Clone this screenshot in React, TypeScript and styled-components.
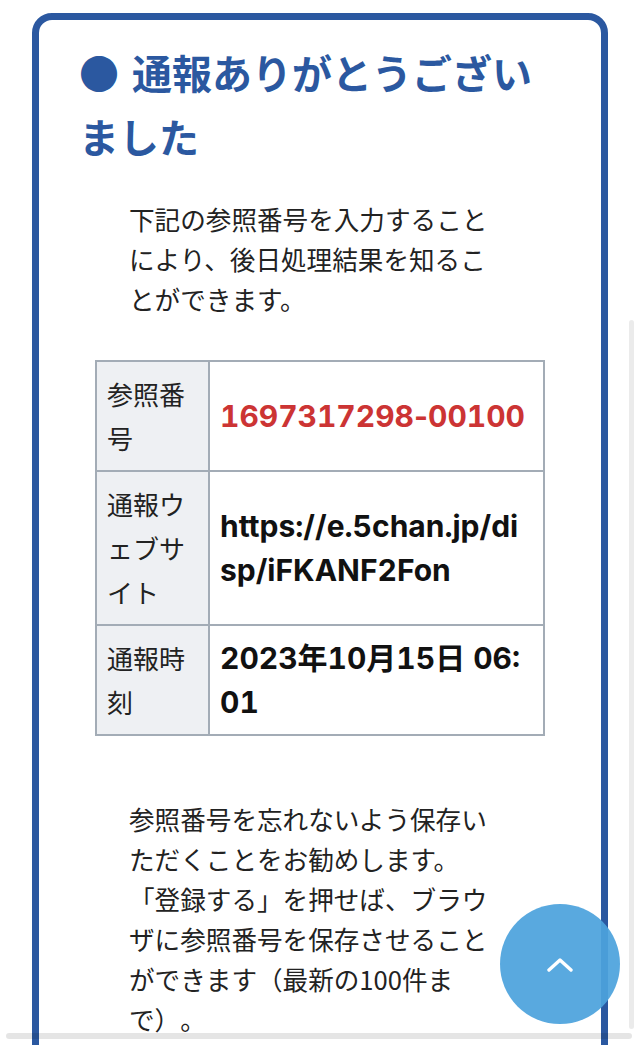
import React from "react";
import styled, { createGlobalStyle } from "styled-components";

const GlobalStyle = createGlobalStyle`
  html, body {
    margin: 0;
    padding: 0;
    background: #ffffff;
    overflow: hidden;
  }
  body {
    font-family: "Noto Sans CJK JP", "Noto Sans", sans-serif;
    color: #222222;
    -webkit-font-smoothing: antialiased;
    text-spacing-trim: space-all;
  }
`;

const Page = styled.div`
  padding: 13px 32px 0;
`;

const Card = styled.section`
  border: 7px solid #2b58a0;
  border-radius: 20px;
  padding: 20px 40px 120px;
  background: #ffffff;
`;

const Title = styled.h2`
  margin: 0;
  font-size: 40px;
  line-height: 64px;
  font-weight: 700;
  color: #2b58a0;
`;

const Bullet = styled.span`
  display: inline-block;
  margin-right: 13px;
`;

const Paragraph = styled.p<{ $top: number }>`
  margin: ${(p) => p.$top}px 60px 0 50px;
  font-size: 25.6px;
  line-height: 40px;
  color: #222222;
  text-spacing-trim: space-all;
`;

const Table = styled.table`
  margin: 41px auto 0;
  width: 450px;
  border-collapse: collapse;
  table-layout: fixed;
  border: 2px solid #a3acb6;
`;

const HeadCol = styled.col`
  width: 113px;
`;

const Th = styled.th`
  background: #eef0f3;
  border: 2px solid #a3acb6;
  padding: 10px 10px;
  font-size: 26px;
  line-height: 44px;
  font-weight: 400;
  text-align: left;
  vertical-align: top;
  color: #222222;
`;

const Td = styled.td<{ $accent?: boolean }>`
  border: 2px solid #a3acb6;
  padding: 10px 10px;
  font-family: "Inter", "Noto Sans CJK JP", sans-serif;
  font-size: 30px;
  font-variant-numeric: tabular-nums;
  line-height: 44px;
  font-weight: 700;
  vertical-align: middle;
  word-break: break-all;
  color: ${(p) => (p.$accent ? "#cc3434" : "#111111")};
`;

const Dash = styled.span`
  font-variant-numeric: normal;
`;

const ScrollTop = styled.button`
  position: fixed;
  right: 20px;
  bottom: 21px;
  width: 120px;
  height: 120px;
  border: none;
  border-radius: 50%;
  background: rgba(76, 162, 221, 0.93);
  display: flex;
  align-items: center;
  justify-content: center;
  padding: 0;
  cursor: pointer;
`;

const HScroll = styled.div`
  position: fixed;
  left: 6px;
  right: 8px;
  bottom: 6px;
  height: 6px;
  border-radius: 3px;
  background: rgba(0, 0, 0, 0.1);
`;

const VScroll = styled.div`
  position: fixed;
  right: 6px;
  top: 320px;
  bottom: 16px;
  width: 5px;
  border-radius: 3px;
  background: rgba(0, 0, 0, 0.08);
`;

export default function App() {
  return (
    <>
      <GlobalStyle />
      <Page>
        <Card>
          <Title>
            <Bullet>●</Bullet>通報ありがとうございました
          </Title>
          <Paragraph $top={31}>
            下記の参照番号を入力することにより、後日処理結果を知ることができます。
          </Paragraph>
          <Table>
            <colgroup>
              <HeadCol />
              <col />
            </colgroup>
            <tbody>
              <tr>
                <Th>参照番号</Th>
                <Td $accent>
                  1697317298<Dash>-</Dash>00100
                </Td>
              </tr>
              <tr>
                <Th>通報ウェブサイト</Th>
                <Td>https://e.5chan.jp/disp/iFKANF2Fon</Td>
              </tr>
              <tr>
                <Th>通報時刻</Th>
                <Td>2023年10月15日 06:01</Td>
              </tr>
            </tbody>
          </Table>
          <Paragraph $top={63}>
            参照番号を忘れないよう保存いただくことをお勧めします。「登録する」を押せば、ブラウザに参照番号を保存させることができます（最新の100件まで）。
          </Paragraph>
        </Card>
      </Page>
      <VScroll />
      <HScroll />
      <ScrollTop aria-label="ページの先頭へ">
        <svg width="26" height="15" viewBox="0 0 26 15" fill="none">
          <polyline
            points="2,13 13,3 24,13"
            stroke="#ffffff"
            strokeWidth="3.4"
            strokeLinecap="round"
            strokeLinejoin="round"
          />
        </svg>
      </ScrollTop>
    </>
  );
}
